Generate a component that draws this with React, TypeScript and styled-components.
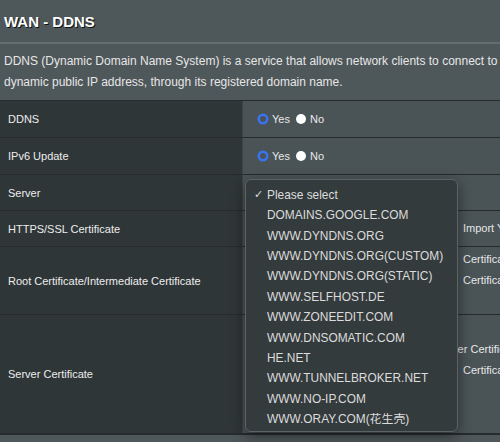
import React from 'react';
import styled, { createGlobalStyle } from 'styled-components';

const GlobalStyle = createGlobalStyle`
    html, body {
        margin: 0;
        padding: 0;
        background: #4e575a;
        overflow: hidden;
    }
    body {
        font-family: "Liberation Sans", Arial, sans-serif;
        color: #ececec;
    }
`

const Page = styled.div`
    position: relative;
    width: 500px;
    height: 442px;
    overflow: hidden;
`

const Title = styled.h1`
    margin: 0;
    padding: 14px 4px 12px;
    font-size: 15px;
    line-height: 16px;
    font-weight: 700;
    color: #ffffff;
    text-shadow: 1px 1px 0 #111;
    border-bottom: 2px solid #646d70;
`

const Description = styled.p`
    margin: 0;
    padding: 7px 4px 7px;
    font-size: 12px;
    line-height: 21px;
    color: #e6e6e6;
    white-space: nowrap;
`

const Table = styled.div`
    display: grid;
    grid-template-columns: 242px 1fr;
    border-top: 1px solid #262c2e;
    border-bottom: 1px solid #262c2e;
`

const LabelCell = styled.div<{ $h: number }>`
    height: ${p => p.$h}px;
    box-sizing: border-box;
    display: flex;
    align-items: center;
    padding-left: 8px;
    background: #2f3638;
    border-bottom: 1px solid #262c2e;
    font-size: 11px;
    color: #ededed;
`

const ValueCell = styled.div<{ $h: number; $top?: number }>`
    height: ${p => p.$h}px;
    box-sizing: border-box;
    display: flex;
    flex-direction: column;
    justify-content: ${p => (p.$top !== undefined ? 'flex-start' : 'center')};
    padding: ${p => p.$top ?? 0}px 0 0 14px;
    background: #4a5356;
    border-bottom: 1px solid #262c2e;
    border-left: 1px solid #3c4446;
    font-size: 11px;
    color: #e8e8e8;
    white-space: nowrap;
    overflow: hidden;
`

const RadioGroup = styled.div`
    display: flex;
    align-items: center;
`

const RadioLabel = styled.label`
    display: flex;
    align-items: center;
    gap: 3px;
    margin-right: 5px;
`

const Line = styled.div<{ $first?: number }>`
    display: grid;
    grid-template-columns: ${p => p.$first ?? 206}px auto;
    line-height: 21px;
`

const Menu = styled.div`
    position: absolute;
    left: 245px;
    top: 179px;
    width: 213px;
    height: 253px;
    box-sizing: border-box;
    padding: 5px 0 4px;
    background: #343b3d;
    border: 1px solid #5c6366;
    border-radius: 6px;
    box-shadow: 0 4px 14px rgba(0, 0, 0, 0.45);
`

const MenuItem = styled.div`
    display: flex;
    height: 20.36px;
    line-height: 20.36px;
    font-size: 11.9px;
    color: #dcdcdc;
    white-space: nowrap;
    font-family: "Liberation Sans", "Noto Sans CJK SC", sans-serif;
`

const Check = styled.span`
    width: 21px;
    box-sizing: border-box;
    padding-left: 8px;
    font-family: "DejaVu Sans", sans-serif;
    font-size: 11px;
`

const Radio: React.FC<{ checked?: boolean }> = ({ checked }) => (
    <svg width="12" height="12" viewBox="0 0 12 12">
        {checked ? (
            <>
                <circle cx="6" cy="6" r="5.5" fill="#3874f2" />
                <circle cx="6" cy="6" r="3" fill="#4a5356" />
            </>
        ) : (
            <circle cx="6" cy="6" r="5" fill="#ffffff" />
        )}
    </svg>
)

const servers = [
    'DOMAINS.GOOGLE.COM',
    'WWW.DYNDNS.ORG',
    'WWW.DYNDNS.ORG(CUSTOM)',
    'WWW.DYNDNS.ORG(STATIC)',
    'WWW.SELFHOST.DE',
    'WWW.ZONEEDIT.COM',
    'WWW.DNSOMATIC.COM',
    'HE.NET',
    'WWW.TUNNELBROKER.NET',
    'WWW.NO-IP.COM',
    'WWW.ORAY.COM(花生壳)',
]

const YesNo: React.FC = () => (
    <RadioGroup>
        <RadioLabel><Radio checked />Yes</RadioLabel>
        <RadioLabel><Radio />No</RadioLabel>
    </RadioGroup>
)

const App: React.FC = () => {
    return (
        <Page>
            <GlobalStyle />
            <Title>WAN - DDNS</Title>
            <Description>
                DDNS (Dynamic Domain Name System) is a service that allows network clients to connect to the router,
                <br />
                dynamic public IP address, through its registered domain name.
            </Description>

            <Table>
                <LabelCell $h={37}>DDNS</LabelCell>
                <ValueCell $h={37}><YesNo /></ValueCell>

                <LabelCell $h={37}>IPv6 Update</LabelCell>
                <ValueCell $h={37}><YesNo /></ValueCell>

                <LabelCell $h={36}>Server</LabelCell>
                <ValueCell $h={36} />

                <LabelCell $h={36}>HTTPS/SSL Certificate</LabelCell>
                <ValueCell $h={36}>
                    <Line>
                        <span />
                        <span>Import Your Own Certificate</span>
                    </Line>
                </ValueCell>

                <LabelCell $h={68}>Root Certificate/Intermediate Certificate</LabelCell>
                <ValueCell $h={68} $top={2}>
                    <Line><span /><span>Certificate not installed</span></Line>
                    <Line><span /><span>Certificate Authority</span></Line>
                </ValueCell>

                <LabelCell $h={119}>Server Certificate</LabelCell>
                <ValueCell $h={119} $top={24}>
                    <Line $first={178}><span /><span>Server Certificate</span></Line>
                    <Line><span /><span>Certificate Key</span></Line>
                </ValueCell>
            </Table>

            <Menu>
                <MenuItem><Check>✓</Check>Please select</MenuItem>
                {servers.map(name => (
                    <MenuItem key={name}><Check />{name}</MenuItem>
                ))}
            </Menu>
        </Page>
    )
}

export default App;
